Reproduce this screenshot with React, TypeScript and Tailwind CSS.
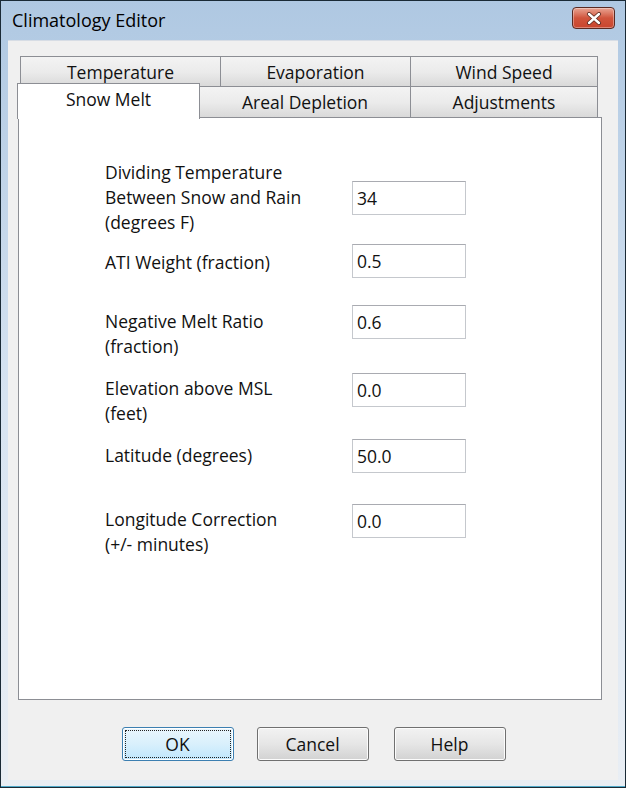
import React from "react";

interface Field {
  lines: string[];
  value: string;
  rowClass: string; // spacing above the row
  labelClass: string; // nudge so the label sits where the dialog puts it
}

const fields: Field[] = [
  { lines: ["Dividing Temperature", "Between Snow and Rain", "(degrees F)"], value: "34", rowClass: "mt-[42px]", labelClass: "" },
  { lines: ["ATI Weight (fraction)"], value: "0.5", rowClass: "mt-[9px]", labelClass: "mt-[6px]" },
  { lines: ["Negative Melt Ratio", "(fraction)"], value: "0.6", rowClass: "mt-[27px]", labelClass: "mt-[4px]" },
  { lines: ["Elevation above MSL", "(feet)"], value: "0.0", rowClass: "mt-[14px]", labelClass: "mt-[3px]" },
  { lines: ["Latitude (degrees)"], value: "50.0", rowClass: "mt-[13px]", labelClass: "mt-[4px]" },
  { lines: ["Longitude Correction", "(+/- minutes)"], value: "0.0", rowClass: "mt-[31px]", labelClass: "mt-[3px]" },
];

const tabBack =
  "h-[31px] border-t border-l border-[#8c8e94] bg-gradient-to-b from-[#f3f3f3] via-[#ebebeb] to-[#d8d8d8] flex items-center justify-center";
const tabFront =
  "h-[32px] border-t border-l border-[#8c8e94] bg-gradient-to-b from-[#f3f3f3] via-[#ebebeb] to-[#d8d8d8] flex items-center justify-center";

function CloseButton() {
  return (
    <div className="w-[43px] h-[22px] rounded-[4px] border border-[#5a2a22] bg-gradient-to-b from-[#e8a493] via-[#d0543c] to-[#c9452e] flex items-center justify-center shadow-[inset_0_0_0_1px_rgba(255,255,255,0.35)]">
      <svg width="16" height="13" viewBox="0 0 16 13">
        <path d="M3 2 L13 11 M13 2 L3 11" stroke="#5b2a20" strokeWidth="4" strokeLinecap="round" />
        <path d="M3 2 L13 11 M13 2 L3 11" stroke="#ffffff" strokeWidth="2.4" strokeLinecap="round" />
      </svg>
    </div>
  );
}

function Button({ label, isDefault, className }: { label: string; isDefault?: boolean; className?: string }) {
  if (isDefault) {
    return (
      <div className={"w-[112px] h-[34px] rounded-[3px] border border-[#3c7fb1] bg-gradient-to-b from-[#eaf6fd] via-[#d9f0fc] to-[#bee6fd] p-[2px] shadow-[inset_0_0_0_1px_#ffffff] " + (className || "")}>
        <div className="w-full h-full border border-dotted border-[#222] flex items-center justify-center">{label}</div>
      </div>
    );
  }
  return (
    <div className={"w-[112px] h-[34px] rounded-[3px] border border-[#707070] bg-gradient-to-b from-[#f2f2f2] via-[#e6e6e6] to-[#d2d2d2] flex items-center justify-center shadow-[inset_0_0_0_1px_#fcfcfc] " + (className || "")}>
      {label}
    </div>
  );
}

export default function App() {
  return (
    <div
      className="w-[626px] h-[788px] flex flex-col border border-[#1a2a36] bg-gradient-to-b from-[#afc8e2] via-[#d6e3f1] to-[#e9eef4] text-[17.5px] text-[#111]"
      style={{ fontFamily: '"Open Sans", "Noto Sans", sans-serif' }}
    >
      {/* title bar */}
      <div className="h-[39px] flex items-start justify-between pl-[11px] pr-[10px]">
        <div className="mt-[6px] text-[18px] text-[#000]">Climatology Editor</div>
        <div className="mt-[6px]">
          <CloseButton />
        </div>
      </div>

      {/* client area */}
      <div className="flex-1 mx-[7px] mb-[6px] bg-[#f0f0f0] flex flex-col border-t border-[#d7dde5]">
        {/* tabs */}
        <div className="pt-[15px]">
          <div className="flex ml-[12px]">
            <div className={tabBack + " w-[200px]"}>Temperature</div>
            <div className={tabBack + " w-[190px]"}>Evaporation</div>
            <div className={tabBack + " w-[188px] border-r"}>Wind Speed</div>
          </div>
          <div className="flex items-end ml-[9px] -mt-[4px]">
            <div className="relative z-10 w-[183px] h-[36px] -mb-px bg-white border-t border-l border-r border-[#8c8e94] flex items-start justify-center pt-[2px]">
              Snow Melt
            </div>
            <div className={tabFront + " w-[210px] border-l-0"}>Areal Depletion</div>
            <div className={tabFront + " w-[188px] border-r"}>Adjustments</div>
          </div>
        </div>

        {/* tab page */}
        <div className="ml-[10px] w-[584px] h-[583px] -mt-px bg-white border border-[#8c8e94] pl-[86px]">
          {fields.map((f, i) => (
            <div key={i} className={"flex items-start " + f.rowClass}>
              <div className={"w-[247px] leading-[25px] " + f.labelClass}>
                {f.lines.map((l, j) => (
                  <div key={j}>{l}</div>
                ))}
              </div>
              <div
                className={
                  "w-[114px] h-[34px] border border-[#c5c8cd] border-t-[#a9abb1] flex items-center pl-[4px] " +
                  (i === 0 ? "mt-[21px]" : "")
                }
              >
                {f.value}
              </div>
            </div>
          ))}
        </div>

        {/* buttons */}
        <div className="flex justify-center pt-[27px] pl-[1px]">
          <Button label="OK" isDefault />
          <Button label="Cancel" className="ml-[23px]" />
          <Button label="Help" className="ml-[25px]" />
        </div>
      </div>
      <div className="h-[1px] bg-[#4fa9c9]" />
    </div>
  );
}
